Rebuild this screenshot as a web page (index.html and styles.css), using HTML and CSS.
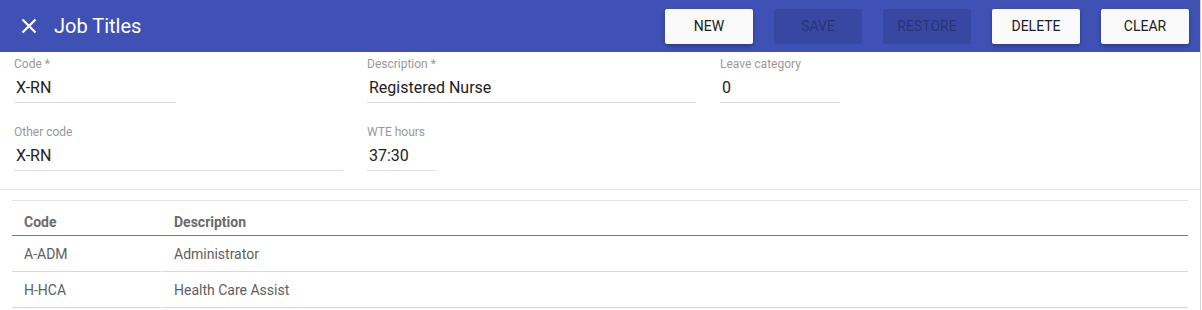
FILE: index.html
```html
<!DOCTYPE html>
<html lang="en">
<head>
    <meta charset="UTF-8">
    <meta name="viewport" content="width=device-width, initial-scale=1.0">
    <title>Job Titles</title>
    <link rel="stylesheet" href="styles.css">
</head>
<body>

<div class="page">
    <div class="toolbar">
        <svg class="close-icon" width="24" height="24" viewBox="0 0 24 24">
            <path d="M5.5 5.5 L18.5 18.5 M18.5 5.5 L5.5 18.5" stroke="#fff" stroke-width="2.2" fill="none"/>
        </svg>
        <h1 class="title">Job Titles</h1>
        <div class="actions">
            <button class="btn">New</button>
            <button class="btn" disabled>Save</button>
            <button class="btn" disabled>Restore</button>
            <button class="btn">Delete</button>
            <button class="btn">Clear</button>
        </div>
    </div>

    <div class="form">
        <div class="field">
            <label for="code">Code *</label>
            <input id="code" class="w-code" value="X-RN">
        </div>
        <div class="field">
            <label for="description">Description *</label>
            <input id="description" value="Registered Nurse">
        </div>
        <div class="field">
            <label for="leave">Leave category</label>
            <input id="leave" value="0">
        </div>
        <div class="field">
            <label for="other">Other code</label>
            <input id="other" value="X-RN">
        </div>
        <div class="field">
            <label for="wte">WTE hours</label>
            <input id="wte" class="w-wte" value="37:30">
        </div>
    </div>

    <div class="list">
        <table class="grid">
            <thead>
                <tr>
                    <th class="col-code">Code</th>
                    <th>Description</th>
                </tr>
            </thead>
            <tbody>
                <tr>
                    <td class="col-code">A-ADM</td>
                    <td>Administrator</td>
                </tr>
                <tr>
                    <td class="col-code">H-HCA</td>
                    <td>Health Care Assist</td>
                </tr>
            </tbody>
        </table>
    </div>
</div>

</body>
</html>
```

FILE: styles.css
```css
/* Page */
body {
    margin: 0;
    font-family: Roboto, 'Liberation Sans', sans-serif;
    background: #fff;
}
.page {
    width: 1200px;
    min-height: 310px;
    border-right: 1px solid #d4d4d4;
}

/* Toolbar */
.toolbar {
    display: flex;
    align-items: center;
    height: 52px;
    padding: 0 11px 0 17px;
    background: #3f51b5;
}
.close-icon {
    flex: none;
    margin-right: 13px;
}
.title {
    margin: 0;
    color: #fff;
    font-size: 20px;
    font-weight: 400;
}
.actions {
    display: flex;
    gap: 21px;
    margin-left: auto;
}
.btn {
    width: 88px;
    height: 35px;
    border: none;
    border-radius: 2px;
    background: #fafafa;
    color: #212121;
    font-family: inherit;
    font-size: 14px;
    text-transform: uppercase;
    box-shadow: 0 2px 4px rgba(0, 0, 0, 0.3);
    cursor: pointer;
}
.btn:disabled {
    background: rgba(0, 0, 0, 0.1);
    color: rgba(0, 0, 0, 0.3);
    box-shadow: none;
    cursor: default;
}

/* Form */
.form {
    display: grid;
    grid-template-columns: 329px 329px 120px;
    column-gap: 24px;
    row-gap: 22px;
    padding: 5px 14px 18px;
    border-bottom: 1px solid #e4e4e4;
}
.field {
    display: flex;
    flex-direction: column;
}
.field label {
    font-size: 12px;
    line-height: 14px;
    color: #999;
}
.field input {
    height: 20px;
    padding: 7px 2px 4px;
    border: none;
    border-bottom: 1px solid #dcdcdc;
    font-family: inherit;
    font-size: 16px;
    line-height: 20px;
    color: #222;
    outline: none;
    box-sizing: content-box;
}
.w-code {
    width: 158px;
}
.w-wte {
    width: 65px;
}

/* Table */
.list {
    padding: 10px 12px 0;
}
.grid {
    width: 100%;
    border-collapse: separate;
    border-spacing: 0;
    border-top: 1px solid #e4e4e4;
    font-size: 14px;
}
.grid th {
    height: 35px;
    padding: 0 12px 5px;
    text-align: left;
    font-weight: 700;
    color: #6b6b6b;
    border-bottom: 1px solid #7a7a7a;
    vertical-align: bottom;
    box-sizing: border-box;
}
.grid td {
    height: 36px;
    padding: 0 12px;
    color: #606060;
    border-bottom: 1px solid #d8d8d8;
    box-sizing: border-box;
}
.grid td.col-code {
    border-right: 2px solid #fff;
}
.col-code {
    width: 150px;
}
```
